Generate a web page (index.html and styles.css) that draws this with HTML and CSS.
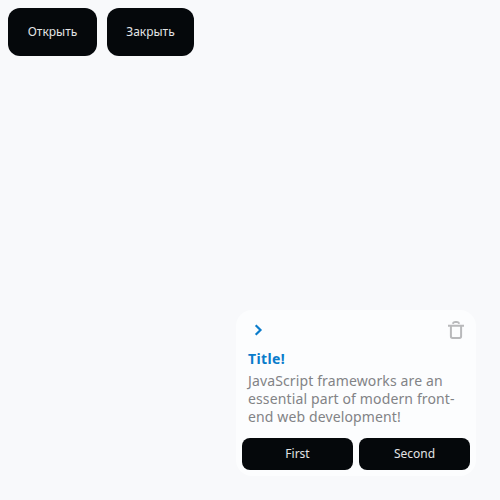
FILE: index.html
```
<!DOCTYPE html>
<html lang="ru">
<head>
<meta charset="utf-8">
<title>Toast</title>
<link rel="stylesheet" href="styles.css">
</head>
<body>
<div class="actions">
<button class="button open">Открыть</button>
<button class="button close">Закрыть</button>
</div>
<section class="toast">
<header class="toast-header">
<svg class="chevron" width="20" height="20" viewBox="0 0 20 20"><path d="M7.7 5.2 12.5 10 7.7 14.8"/></svg>
<svg class="trash" width="20" height="20" viewBox="0 0 20 20"><path d="M2 5.8H18M6.8 3.8Q7.2 2 9 2H11Q12.8 2 13.2 3.8M4.9 6V16.3Q4.9 18 6.5 18H13.5Q15.1 18 15.1 16.3V6"/></svg>
</header>
<h1 class="title">Title!</h1>
<p class="text">JavaScript frameworks are an essential part of modern front-end web development!</p>
<div class="toast-actions">
<button class="button small">First</button>
<button class="button small">Second</button>
</div>
</section>
</body>
</html>
```
FILE: styles.css
```
* { box-sizing: border-box; }
body {
  margin: 0;
  padding: 8px;
  height: 100vh;
  background: #f8f9fb;
  font-family: "Noto Sans", sans-serif;
}
.actions { display: flex; gap: 10px; }
.button {
  height: 48px;
  padding: 0;
  border: 0;
  border-radius: 12px;
  background: #05080b;
  color: #e2e3e5;
  font: 400 12px/16px "Noto Sans", sans-serif;
}
.open { width: 89px; }
.close { width: 87px; }
.toast {
  position: fixed;
  right: 24px;
  bottom: 24px;
  width: 240px;
  height: 166px;
  padding: 6px;
  border-radius: 16px;
  background: #fcfdfe;
}
.toast-header {
  display: flex;
  justify-content: space-between;
  padding: 4px 4px 0 6px;
}
.chevron, .trash { fill: none; stroke-width: 2; }
.chevron { stroke: #0a7ccb; stroke-width: 2.2; }
.trash { stroke: #b8b9bb; }
.title, .text { margin: 0; padding: 0 6px; font-size: 14px; line-height: 18px; }
.title { margin-top: 10px; color: #0a7ccb; font-weight: 700; letter-spacing: 0.4px; }
.text { margin-top: 4px; padding-right: 0; color: #828386; letter-spacing: 0.13px; }
.toast-actions { display: flex; gap: 6px; margin-top: 12px; }
.small { flex: 1; height: 32px; border-radius: 8px; }
```
